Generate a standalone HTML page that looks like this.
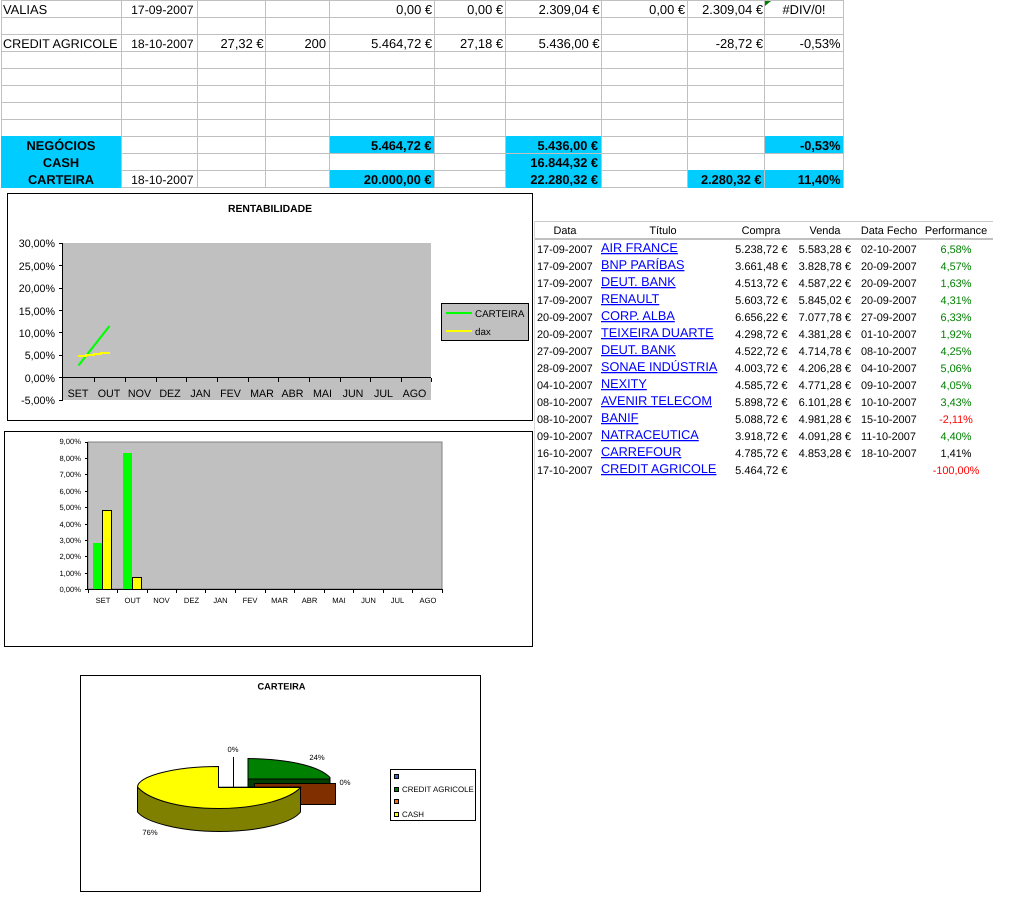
<!DOCTYPE html>
<html lang="pt">
<head>
<meta charset="utf-8">
<title>Carteira</title>
<style>
html,body{margin:0;padding:0;background:#fff;width:1012px;height:913px;overflow:hidden}
svg{display:block;font-family:"Liberation Sans",Arial,sans-serif;text-rendering:geometricPrecision}
.t{font-size:12.9px;fill:#000}
.dt{font-size:12.2px;fill:#000;text-anchor:end}
.b{font-size:12.8px;font-weight:bold;fill:#000}
.e{text-anchor:end}
.m{text-anchor:middle}
.d{font-size:10.9px;fill:#000}
.n{font-size:11.1px;fill:#000;text-anchor:end}
.l{font-size:12.7px;fill:#00f;text-decoration:underline;transform:translateY(-1px)}
.g{fill:#008000}
.r{fill:#f00}
.a{font-size:10.7px;fill:#000}
.lg{font-size:9.8px;fill:#000}
.s{font-size:7.6px;fill:#000}
.p{font-size:7.9px;fill:#000}
</style>
</head>
<body>
<svg width="1012" height="913" viewBox="0 0 1012 913" xmlns="http://www.w3.org/2000/svg">
<!-- top sheet fills -->
<g fill="#00ccff">
<rect x="1" y="136" width="121" height="52"/>
<rect x="329" y="136" width="106" height="18"/>
<rect x="329" y="170" width="106" height="18"/>
<rect x="505" y="136" width="97" height="52"/>
<rect x="687" y="170" width="78" height="18"/>
<rect x="764" y="136" width="80" height="18"/>
<rect x="764" y="170" width="80" height="18"/>
</g>
<!-- grid -->
<g stroke="#c0c0c0" stroke-width="1" fill="none" shape-rendering="crispEdges">
<path d="M1 .5H844M1 17.5H844M1 34.5H844M1 51.5H844M1 68.5H844M1 85.5H844M1 102.5H844M1 119.5H844"/>
<path d="M122 136.5H329M435 136.5H505M602 136.5H764M122 153.5H844M122 170.5H329M435 170.5H505M602 170.5H687M122 187.5H329M435 187.5H505M602 187.5H687"/>
<path d="M1.500 0V136M121.500 0V188M197.500 0V188M265.500 0V188M329.500 0V188M434.500 0V188M505.500 0V188M601.500 0V188M687.500 0V188M764.500 0V188M843.500 0V188"/>
</g>
<path d="M765 1H771L765 6Z" fill="#008000"/>
<!-- top sheet text -->
<text class="t" x="3" y="14">VALIAS</text>
<text class="dt" x="193.500" y="14">17-09-2007</text>
<text class="t e" x="432" y="14">0,00 €</text>
<text class="t e" x="503" y="14">0,00 €</text>
<text class="t e" x="599.500" y="14">2.309,04 €</text>
<text class="t e" x="685" y="14">0,00 €</text>
<text class="t e" x="763" y="14">2.309,04 €</text>
<text class="t m" x="804" y="14">#DIV/0!</text>
<text class="t" x="3" y="48" style="font-size:12.6px">CREDIT AGRICOLE</text>
<text class="dt" x="193.500" y="48">18-10-2007</text>
<text class="t e" x="263.500" y="48">27,32 €</text>
<text class="t e" x="326" y="48">200</text>
<text class="t e" x="432" y="48">5.464,72 €</text>
<text class="t e" x="503" y="48">27,18 €</text>
<text class="t e" x="599.500" y="48">5.436,00 €</text>
<text class="t e" x="763" y="48">-28,72 €</text>
<text class="t e" x="840.500" y="48">-0,53%</text>
<text class="b m" x="61" y="150">NEGÓCIOS</text>
<text class="b e" x="431.500" y="150">5.464,72 €</text>
<text class="b e" x="598" y="150">5.436,00 €</text>
<text class="b e" x="840.500" y="150">-0,53%</text>
<text class="b m" x="61" y="167">CASH</text>
<text class="b e" x="598" y="167">16.844,32 €</text>
<text class="b m" x="61" y="184">CARTEIRA</text>
<text class="dt" x="193.500" y="184">18-10-2007</text>
<text class="b e" x="431.500" y="184">20.000,00 €</text>
<text class="b e" x="598" y="184">22.280,32 €</text>
<text class="b e" x="761.500" y="184">2.280,32 €</text>
<text class="b e" x="840.500" y="184">11,40%</text>

<!-- chart 1 -->
<rect x="7.500" y="193.500" width="525" height="227" fill="#fff" stroke="#000" shape-rendering="crispEdges"/>
<text class="m" x="270" y="212" style="font-size:10.4px;font-weight:bold">RENTABILIDADE</text>
<rect x="62" y="243" width="369" height="157" fill="#c0c0c0"/>
<g stroke="#000" fill="none" shape-rendering="crispEdges">
<path d="M62.500 243V400M59 243.500H63M59 265.500H63M59 288.500H63M59 310.500H63M59 332.500H63M59 355.500H63M59 377.500H63M59 400.500H63"/>
<path d="M62 377.500H431M94.500 378V382M125.500 378V382M156.500 378V382M186.500 378V382M217.500 378V382M248.500 378V382M278.500 378V382M309.500 378V382M340.500 378V382M370.500 378V382M401.500 378V382M431.500 378V382"/>
</g>
<text class="a e" x="55" y="247">30,00%</text>
<text class="a e" x="55" y="270">25,00%</text>
<text class="a e" x="55" y="292">20,00%</text>
<text class="a e" x="55" y="315">15,00%</text>
<text class="a e" x="55" y="337">10,00%</text>
<text class="a e" x="55" y="359">5,00%</text>
<text class="a e" x="55" y="382">0,00%</text>
<text class="a e" x="55" y="404">-5,00%</text>
<text class="a m" x="78" y="397">SET</text>
<text class="a m" x="109" y="397">OUT</text>
<text class="a m" x="139.500" y="397">NOV</text>
<text class="a m" x="170" y="397">DEZ</text>
<text class="a m" x="200.500" y="397">JAN</text>
<text class="a m" x="230.500" y="397">FEV</text>
<text class="a m" x="262" y="397">MAR</text>
<text class="a m" x="292.500" y="397">ABR</text>
<text class="a m" x="322.500" y="397">MAI</text>
<text class="a m" x="353" y="397">JUN</text>
<text class="a m" x="383.500" y="397">JUL</text>
<text class="a m" x="414.500" y="397">AGO</text>
<path d="M78.500 365.500L109.500 326" stroke="#00ff00" stroke-width="2.200" fill="none"/>
<path d="M78 356H86V355H94V354H101V353H110" stroke="#ffff00" stroke-width="2" fill="none"/>
<rect x="441.500" y="303.500" width="87" height="37" fill="#c0c0c0" stroke="#000" shape-rendering="crispEdges"/>
<path d="M446 313H472" stroke="#00ff00" stroke-width="2"/>
<path d="M446 331H472" stroke="#ffff00" stroke-width="2"/>
<text class="lg" x="475" y="317">CARTEIRA</text>
<text class="lg" x="475" y="335">dax</text>

<!-- chart 2 -->
<rect x="4.500" y="431.500" width="528" height="215" fill="#fff" stroke="#000" shape-rendering="crispEdges"/>
<rect x="88" y="442" width="354" height="147" fill="#c0c0c0" stroke="#808080" shape-rendering="crispEdges"/>
<rect x="93" y="543" width="9" height="46" fill="#00ff00"/>
<rect x="102.500" y="510.500" width="9" height="79" fill="#ffff00" stroke="#000" shape-rendering="crispEdges"/>
<rect x="123" y="453" width="9" height="136" fill="#00ff00"/>
<rect x="132.500" y="577.500" width="9" height="12" fill="#ffff00" stroke="#000" shape-rendering="crispEdges"/>
<g stroke="#000" fill="none" shape-rendering="crispEdges">
<path d="M87.500 442V590M85 442.500H88M85 458.500H88M85 474.500H88M85 491.500H88M85 507.500H88M85 524.500H88M85 540.500H88M85 556.500H88M85 573.500H88"/>
<path d="M85 589.500H442M88.500 589V593M117.500 589V593M147.500 589V593M176.500 589V593M205.500 589V593M235.500 589V593M265.500 589V593M294.500 589V593M324.500 589V593M353.500 589V593M383.500 589V593M412.500 589V593M442.500 589V593"/>
</g>
<text class="s e" x="81" y="444">9,00%</text>
<text class="s e" x="81" y="461">8,00%</text>
<text class="s e" x="81" y="477">7,00%</text>
<text class="s e" x="81" y="494">6,00%</text>
<text class="s e" x="81" y="510">5,00%</text>
<text class="s e" x="81" y="527">4,00%</text>
<text class="s e" x="81" y="543">3,00%</text>
<text class="s e" x="81" y="559">2,00%</text>
<text class="s e" x="81" y="576">1,00%</text>
<text class="s e" x="81" y="592">0,00%</text>
<text class="s m" x="103" y="603">SET</text>
<text class="s m" x="132.500" y="603">OUT</text>
<text class="s m" x="161.500" y="603">NOV</text>
<text class="s m" x="191.500" y="603">DEZ</text>
<text class="s m" x="220.500" y="603">JAN</text>
<text class="s m" x="250" y="603">FEV</text>
<text class="s m" x="279.500" y="603">MAR</text>
<text class="s m" x="309.500" y="603">ABR</text>
<text class="s m" x="339" y="603">MAI</text>
<text class="s m" x="368.500" y="603">JUN</text>
<text class="s m" x="397.500" y="603">JUL</text>
<text class="s m" x="428" y="603">AGO</text>

<!-- chart 3 -->
<rect x="80.500" y="675.500" width="400" height="216" fill="#fff" stroke="#000" shape-rendering="crispEdges"/>
<text class="m" x="281.500" y="689.500" style="font-size:9.300px;font-weight:bold">CARTEIRA</text>
<path d="M233.500 757V787" stroke="#000" fill="none" shape-rendering="crispEdges"/>
<!-- green slice -->
<path d="M248 758.500C285 759 318 765 330 777.500V787H248Z" fill="#008000" stroke="#000" stroke-width="1"/>
<path d="M248 779H330V787.500H248Z" fill="#004000" stroke="#000" stroke-width="1"/>
<!-- brown slice -->
<rect x="254.500" y="783.500" width="81" height="21" fill="#803000" stroke="#000" shape-rendering="crispEdges"/>
<!-- yellow slice -->
<path d="M137.500 787.500V812C145 822 180 831.500 219 831.500C262 831.500 293 822 300.500 812V787Z" fill="#808000" stroke="#000" stroke-width="1"/>
<path d="M218.500 766.500V787.500H300.500C291 798 260 808.500 219 808.500C175 808.500 147 798 137.500 787C137.500 776 175 766.500 218.500 766.500Z" fill="#ffff00" stroke="#000" stroke-width="1"/>
<text class="s m" x="233" y="752">0%</text>
<text class="s m" x="317" y="760">24%</text>
<text class="s m" x="345" y="785">0%</text>
<text class="s m" x="150" y="835">76%</text>
<rect x="390.500" y="769.500" width="85" height="51" fill="#fff" stroke="#000" shape-rendering="crispEdges"/>
<g stroke="#000" shape-rendering="crispEdges">
<rect x="394.500" y="774.500" width="4" height="4" fill="#3366cc"/>
<rect x="394.500" y="787.500" width="4" height="4" fill="#008000"/>
<rect x="394.500" y="799.500" width="4" height="4" fill="#ff6600"/>
<rect x="394.500" y="812.500" width="4" height="4" fill="#ffff00"/>
</g>
<text class="p" x="402" y="792">CREDIT AGRICOLE</text>
<text class="p" x="402" y="817">CASH</text>

<!-- right table -->
<g fill="none" shape-rendering="crispEdges">
<path d="M534.500 221V480" stroke="#d8d8d8"/>
<path d="M535 221.500H993" stroke="#c8c8c8"/>
<path d="M535 239H993" stroke="#c0c0c0" stroke-width="2"/>
</g>
<text class="d m" x="565" y="234">Data</text>
<text class="d m" x="663" y="234">Título</text>
<text class="d m" x="761" y="234">Compra</text>
<text class="d m" x="825" y="234">Venda</text>
<text class="d m" x="889" y="234">Data Fecho</text>
<text class="d m" x="956" y="234">Performance</text>

<text class="d" x="537" y="253">17-09-2007</text><text class="l" x="601" y="253">AIR FRANCE</text><text class="n" x="787.500" y="253">5.238,72 €</text><text class="n" x="851" y="253">5.583,28 €</text><text class="d" x="861" y="253">02-10-2007</text><text class="d m g" x="956" y="253">6,58%</text>
<text class="d" x="537" y="270">17-09-2007</text><text class="l" x="601" y="270">BNP PARÍBAS</text><text class="n" x="787.500" y="270">3.661,48 €</text><text class="n" x="851" y="270">3.828,78 €</text><text class="d" x="861" y="270">20-09-2007</text><text class="d m g" x="956" y="270">4,57%</text>
<text class="d" x="537" y="287">17-09-2007</text><text class="l" x="601" y="287">DEUT. BANK</text><text class="n" x="787.500" y="287">4.513,72 €</text><text class="n" x="851" y="287">4.587,22 €</text><text class="d" x="861" y="287">20-09-2007</text><text class="d m g" x="956" y="287">1,63%</text>
<text class="d" x="537" y="304">17-09-2007</text><text class="l" x="601" y="304">RENAULT</text><text class="n" x="787.500" y="304">5.603,72 €</text><text class="n" x="851" y="304">5.845,02 €</text><text class="d" x="861" y="304">20-09-2007</text><text class="d m g" x="956" y="304">4,31%</text>
<text class="d" x="537" y="321">20-09-2007</text><text class="l" x="601" y="321">CORP. ALBA</text><text class="n" x="787.500" y="321">6.656,22 €</text><text class="n" x="851" y="321">7.077,78 €</text><text class="d" x="861" y="321">27-09-2007</text><text class="d m g" x="956" y="321">6,33%</text>
<text class="d" x="537" y="338">20-09-2007</text><text class="l" x="601" y="338">TEIXEIRA DUARTE</text><text class="n" x="787.500" y="338">4.298,72 €</text><text class="n" x="851" y="338">4.381,28 €</text><text class="d" x="861" y="338">01-10-2007</text><text class="d m g" x="956" y="338">1,92%</text>
<text class="d" x="537" y="355">27-09-2007</text><text class="l" x="601" y="355">DEUT. BANK</text><text class="n" x="787.500" y="355">4.522,72 €</text><text class="n" x="851" y="355">4.714,78 €</text><text class="d" x="861" y="355">08-10-2007</text><text class="d m g" x="956" y="355">4,25%</text>
<text class="d" x="537" y="372">28-09-2007</text><text class="l" x="601" y="372">SONAE INDÚSTRIA</text><text class="n" x="787.500" y="372">4.003,72 €</text><text class="n" x="851" y="372">4.206,28 €</text><text class="d" x="861" y="372">04-10-2007</text><text class="d m g" x="956" y="372">5,06%</text>
<text class="d" x="537" y="389">04-10-2007</text><text class="l" x="601" y="389">NEXITY</text><text class="n" x="787.500" y="389">4.585,72 €</text><text class="n" x="851" y="389">4.771,28 €</text><text class="d" x="861" y="389">09-10-2007</text><text class="d m g" x="956" y="389">4,05%</text>
<text class="d" x="537" y="406">08-10-2007</text><text class="l" x="601" y="406">AVENIR TELECOM</text><text class="n" x="787.500" y="406">5.898,72 €</text><text class="n" x="851" y="406">6.101,28 €</text><text class="d" x="861" y="406">10-10-2007</text><text class="d m g" x="956" y="406">3,43%</text>
<text class="d" x="537" y="423">08-10-2007</text><text class="l" x="601" y="423">BANIF</text><text class="n" x="787.500" y="423">5.088,72 €</text><text class="n" x="851" y="423">4.981,28 €</text><text class="d" x="861" y="423">15-10-2007</text><text class="d m r" x="956" y="423">-2,11%</text>
<text class="d" x="537" y="440">09-10-2007</text><text class="l" x="601" y="440">NATRACEUTICA</text><text class="n" x="787.500" y="440">3.918,72 €</text><text class="n" x="851" y="440">4.091,28 €</text><text class="d" x="861" y="440">11-10-2007</text><text class="d m g" x="956" y="440">4,40%</text>
<text class="d" x="537" y="457">16-10-2007</text><text class="l" x="601" y="457">CARREFOUR</text><text class="n" x="787.500" y="457">4.785,72 €</text><text class="n" x="851" y="457">4.853,28 €</text><text class="d" x="861" y="457">18-10-2007</text><text class="d m" x="956" y="457">1,41%</text>
<text class="d" x="537" y="474">17-10-2007</text><text class="l" x="601" y="474">CREDIT AGRICOLE</text><text class="n" x="787.500" y="474">5.464,72 €</text><text class="d m r" x="956" y="474">-100,00%</text>
</svg>
</body>
</html>
